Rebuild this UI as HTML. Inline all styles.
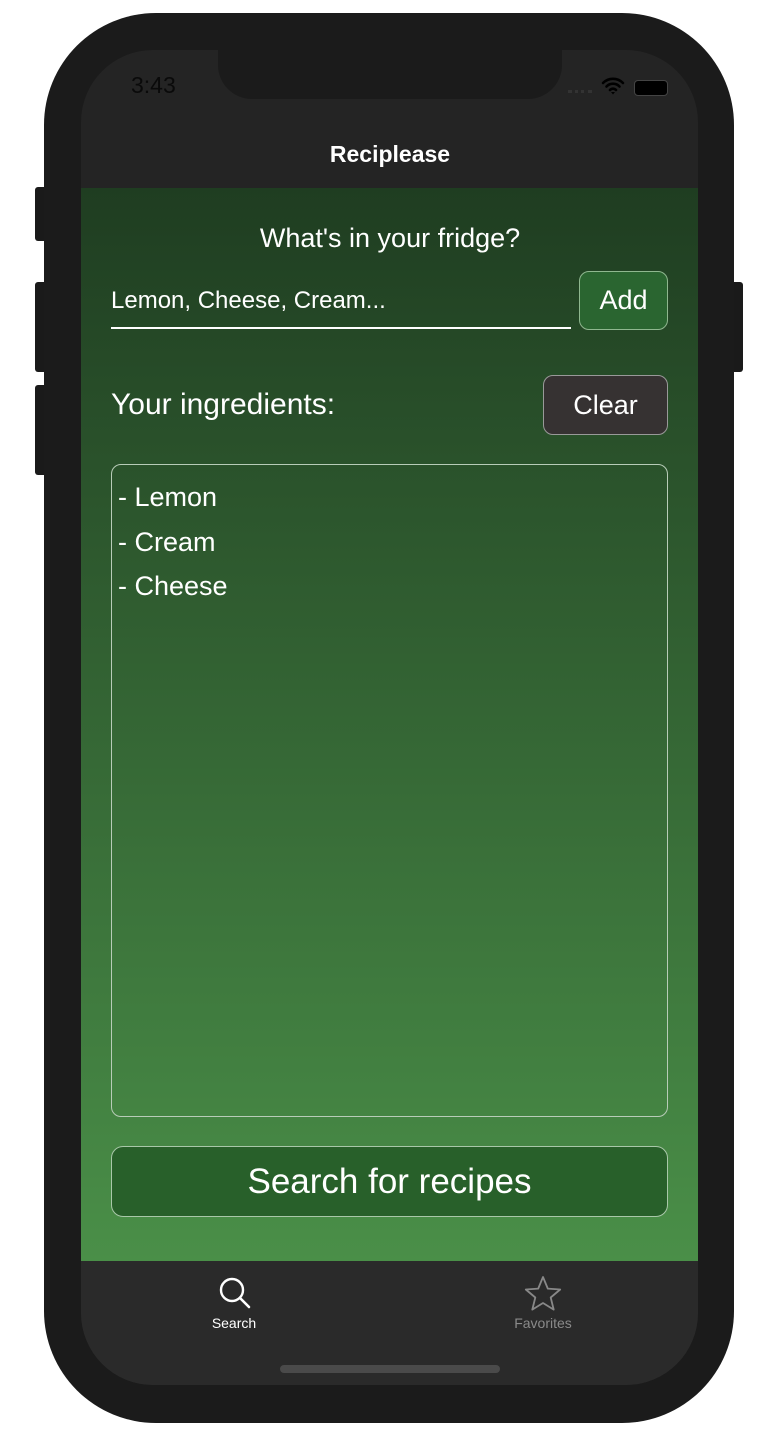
<!DOCTYPE html>
<html><head><style>
body{margin:0;width:780px;height:1440px;background:#fff;position:relative;overflow:hidden;font-family:"Liberation Sans",sans-serif}
.a{position:absolute}
.btn{position:absolute;background:#1a1a1a;border-radius:3px}
</style></head><body>
<div class="btn" style="left:35px;top:187px;width:12px;height:54px"></div>
<div class="btn" style="left:35px;top:282px;width:12px;height:90px"></div>
<div class="btn" style="left:35px;top:385px;width:12px;height:90px"></div>
<div class="btn" style="left:731px;top:282px;width:12px;height:90px"></div>
<div class="a" style="left:44px;top:13px;width:690px;height:1410px;background:#1b1b1b;border-radius:112px"></div>
<div class="a" style="left:81px;top:50px;width:617px;height:1335px;background:#242424;border-radius:72px;overflow:hidden">
  <div class="a" style="left:0;top:138px;width:617px;height:1073px;background:linear-gradient(#1f3d21,#4a8f48)"></div>
  <div class="a" style="left:0;top:1211px;width:617px;height:124px;background:#2a2a2a"></div>
</div>
<div class="a" style="left:218px;top:40px;width:344px;height:59px;background:#1b1b1b;border-radius:0 0 34px 34px"></div>
<div class="a" style="left:131px;top:72px;font-size:23px;color:#0a0a0a">3:43</div>
<div class="a" style="left:568px;top:90px;width:24px;height:4px;border-top:3px dotted #333"></div>
<svg class="a" style="left:601px;top:77px" width="24" height="18" viewBox="0 0 24 18"><path d="M2 6a14 14 0 0 1 20 0M5.5 9.5a9 9 0 0 1 13 0M9 13a4 4 0 0 1 6 0" stroke="#000" stroke-width="2.6" fill="none" stroke-linecap="round"/><path d="M10 15l2 2.5 2-2.5z" fill="#000"/></svg>
<div class="a" style="left:634px;top:80px;width:32px;height:14px;background:#000;border-radius:4px;border:1px solid #444"></div>
<div class="a" style="left:0;top:141px;width:780px;text-align:center;color:#fff;font-weight:bold;font-size:23px">Reciplease</div>
<div class="a" style="left:0;top:223px;width:780px;text-align:center;color:#fff;font-size:27px">What's in your fridge?</div>
<div class="a" style="left:111px;top:287px;color:#fff;font-size:24px">Lemon, Cheese, Cream...</div>
<div class="a" style="left:111px;top:327px;width:460px;height:2px;background:#fff"></div>
<div class="a" style="left:579px;top:271px;width:87px;height:57px;background:#2a6530;border:1px solid #8fb78f;border-radius:10px;color:#fff;font-size:27px;text-align:center;line-height:57px">Add</div>
<div class="a" style="left:111px;top:388px;color:#fff;font-size:30px">Your ingredients:</div>
<div class="a" style="left:543px;top:375px;width:123px;height:58px;background:#363232;border:1px solid #999;border-radius:10px;color:#fff;font-size:27px;text-align:center;line-height:58px">Clear</div>
<div class="a" style="left:111px;top:464px;width:555px;height:651px;border:1px solid #b8ccb8;border-radius:10px"></div>
<div class="a" style="left:118px;top:475px;color:#fff;font-size:27px;line-height:44.5px">- Lemon<br>- Cream<br>- Cheese</div>
<div class="a" style="left:111px;top:1146px;width:555px;height:69px;background:#28602a;border:1px solid #a9c8a9;border-radius:12px;color:#fff;font-size:35px;text-align:center;line-height:69px">Search for recipes</div>
<svg class="a" style="left:218px;top:1276px" width="34" height="34" viewBox="0 0 34 34"><circle cx="14" cy="14" r="11" stroke="#fff" stroke-width="2.4" fill="none"/><path d="M22 22l9 9" stroke="#fff" stroke-width="2.6" stroke-linecap="round"/></svg>
<div class="a" style="left:184px;top:1315px;width:100px;text-align:center;color:#fff;font-size:14px">Search</div>
<svg class="a" style="left:523px;top:1275px" width="40" height="38" viewBox="0 0 40 38"><path d="M20 2l4.8 11.6 12.4.9-9.5 8 3 12.1L20 28l-10.7 6.6 3-12.1-9.5-8 12.4-.9z" stroke="#888" stroke-width="1.8" fill="none" stroke-linejoin="round"/></svg>
<div class="a" style="left:493px;top:1315px;width:100px;text-align:center;color:#8a8a8a;font-size:14px">Favorites</div>
<div class="a" style="left:280px;top:1365px;width:220px;height:8px;background:#4a4a4a;border-radius:4px"></div>
</body></html>
